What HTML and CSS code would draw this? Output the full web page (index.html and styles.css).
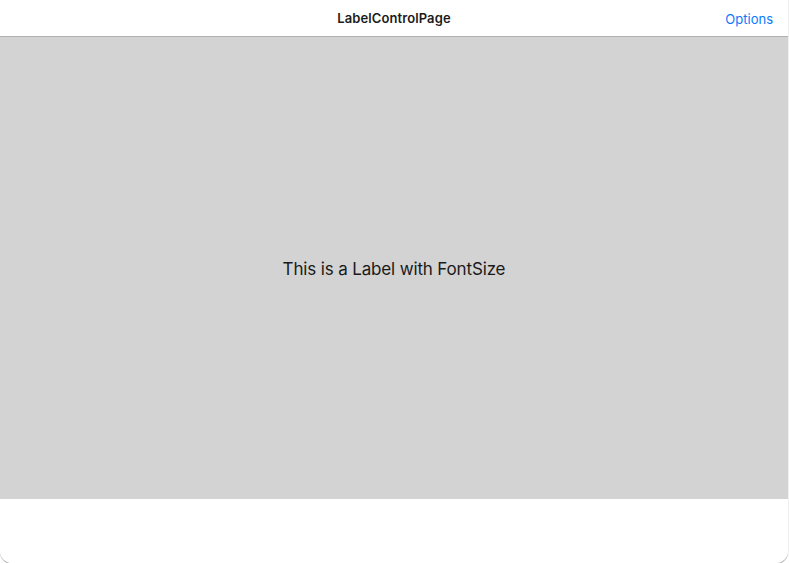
FILE: index.html
```html
<!DOCTYPE html>
<html>
<head>
<meta charset="utf-8">
<link rel="stylesheet" href="styles.css">
</head>
<body>
<div class="window">
  <header class="navbar">
    <div class="title">LabelControlPage</div>
    <div class="options">Options</div>
  </header>
  <main class="content">
    <div class="label">This is a Label with FontSize</div>
  </main>
  <footer class="footer"></footer>
</div>
</body>
</html>
```
FILE: styles.css
```css
html, body {
  margin: 0;
  padding: 0;
  background: #ffffff;
  font-family: Inter, "Noto Sans", "Liberation Sans", sans-serif;
}
.window {
  width: 788px;
  height: 563px;
  display: flex;
  flex-direction: column;
  box-sizing: border-box;
  border-bottom-left-radius: 12px;
  border-bottom-right-radius: 12px;
  box-shadow: 0 1px 0 0 #9a9a9a, 1px 0 0 0 #f0f0f0;
  overflow: hidden;
}
.navbar {
  height: 36px;
  flex: 0 0 36px;
  display: flex;
  align-items: center;
  justify-content: center;
  position: relative;
  border-bottom: 1px solid #b0b0b0;
  background: #ffffff;
}
.title {
  font-size: 13px;
  font-weight: 600;
  color: #1c1c1c;
  letter-spacing: 0.1px;
}
.options {
  position: absolute;
  right: 15px;
  top: 11px;
  font-size: 13px;
  color: #0a7aff;
}
.content {
  height: 462px;
  flex: 0 0 462px;
  background: #d3d3d3;
  display: flex;
  align-items: center;
  justify-content: center;
}
.label {
  font-size: 17px;
  color: #1a1a1a;
  letter-spacing: -0.15px;
  margin-top: 2px;
}
.footer {
  flex: 1;
  background: #ffffff;
}
```
